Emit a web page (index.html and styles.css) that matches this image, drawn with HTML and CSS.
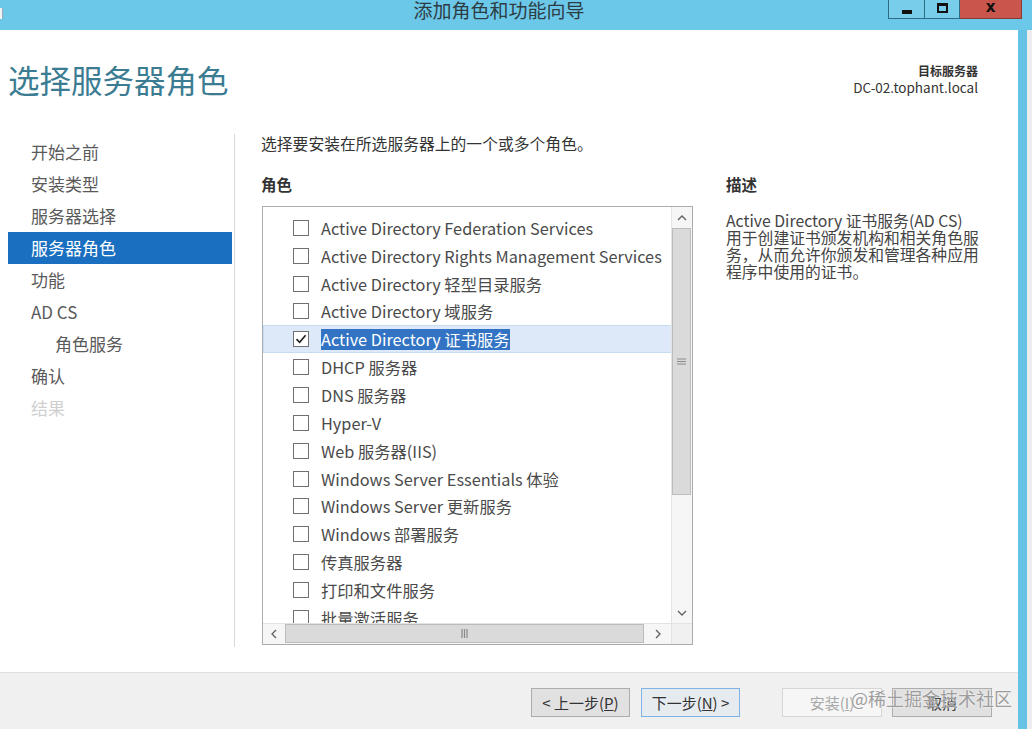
FILE: index.html
```html
<!DOCTYPE html>
<html lang="zh-CN">
<head>
<meta charset="utf-8">
<title>添加角色和功能向导</title>
<link rel="stylesheet" href="styles.css">
</head>
<body>
<div class="screen">
  <div class="titlebar">
    <span class="appicon"></span>
    <div class="title">添加角色和功能向导</div>
    <div class="wbtns">
      <div class="wb min"><span class="min-glyph"></span></div>
      <div class="wb max"><span class="max-glyph"></span></div>
      <div class="wb close">x</div>
    </div>
  </div>
  <div class="frame">
    <div class="client">
      <header class="head">
        <h1>选择服务器角色</h1>
        <div class="target">
          <div class="tlabel">目标服务器</div>
          <div>DC-02.tophant.local</div>
        </div>
      </header>
      <div class="body">
        <nav class="nav">
          <div class="nav-item">开始之前</div>
          <div class="nav-item">安装类型</div>
          <div class="nav-item">服务器选择</div>
          <div class="nav-item active">服务器角色</div>
          <div class="nav-item">功能</div>
          <div class="nav-item">AD CS</div>
          <div class="nav-item sub">角色服务</div>
          <div class="nav-item">确认</div>
          <div class="nav-item disabled">结果</div>
        </nav>
        <section class="main">
          <p class="intro">选择要安装在所选服务器上的一个或多个角色。</p>
          <div class="cols">
            <div class="rolecol">
              <div class="lbl">角色</div>
              <div class="listbox">
                <div class="rows">
                  <div class="row"><span class="cb"></span>Active Directory Federation Services</div>
                  <div class="row"><span class="cb"></span>Active Directory Rights Management Services</div>
                  <div class="row"><span class="cb"></span>Active Directory 轻型目录服务</div>
                  <div class="row"><span class="cb"></span>Active Directory 域服务</div>
                  <div class="row sel"><span class="cb"><svg width="14" height="14" viewBox="0 0 14 14"><path d="M2.5 7.2 L5.6 10.3 L11.6 3.2" fill="none" stroke="#222" stroke-width="1.7"/></svg></span><span class="hl">Active Directory 证书服务</span></div>
                  <div class="row"><span class="cb"></span>DHCP 服务器</div>
                  <div class="row"><span class="cb"></span>DNS 服务器</div>
                  <div class="row"><span class="cb"></span>Hyper-V</div>
                  <div class="row"><span class="cb"></span>Web 服务器(IIS)</div>
                  <div class="row"><span class="cb"></span>Windows Server Essentials 体验</div>
                  <div class="row"><span class="cb"></span>Windows Server 更新服务</div>
                  <div class="row"><span class="cb"></span>Windows 部署服务</div>
                  <div class="row"><span class="cb"></span>传真服务器</div>
                  <div class="row"><span class="cb"></span>打印和文件服务</div>
                  <div class="row"><span class="cb"></span>批量激活服务</div>
                  <div class="row"><span class="cb"></span>网络策略和访问服务</div>
                </div>
                <div class="vscroll">
                  <div class="arrow"><svg width="10" height="6" viewBox="0 0 10 6"><path d="M1 5 L5 1 L9 5" fill="none" stroke="#606060" stroke-width="1.3"/></svg></div>
                  <div class="vthumb"><svg width="9" height="7" viewBox="0 0 9 7"><path d="M0 1 H9 M0 3.5 H9 M0 6 H9" stroke="#8a8a8a" stroke-width="1.2"/></svg></div>
                  <div class="vspace"></div>
                  <div class="arrow"><svg width="10" height="6" viewBox="0 0 10 6"><path d="M1 1 L5 5 L9 1" fill="none" stroke="#606060" stroke-width="1.3"/></svg></div>
                </div>
                <div class="hscroll">
                  <div class="harrow"><svg width="6" height="10" viewBox="0 0 6 10"><path d="M5 1 L1 5 L5 9" fill="none" stroke="#606060" stroke-width="1.3"/></svg></div>
                  <div class="hthumb"><svg width="7" height="9" viewBox="0 0 7 9"><path d="M1 0 V9 M3.5 0 V9 M6 0 V9" stroke="#8a8a8a" stroke-width="1.2"/></svg></div>
                  <div class="harrow right"><svg width="6" height="10" viewBox="0 0 6 10"><path d="M1 1 L5 5 L1 9" fill="none" stroke="#606060" stroke-width="1.3"/></svg></div>
                </div>
                <div class="corner"></div>
              </div>
            </div>
            <div class="desccol">
              <div class="lbl">描述</div>
              <p class="desc">Active Directory 证书服务(AD CS) 用于创建证书颁发机构和相关角色服务，从而允许你颁发和管理各种应用程序中使用的证书。</p>
            </div>
          </div>
        </section>
      </div>
      <footer class="foot">
        <div class="btn b1">&lt; 上一步(<u>P</u>)</div>
        <div class="btn b2 default">下一步(<u>N</u>) &gt;</div>
        <div class="btn b3 disabled">安装(<u>I</u>)</div>
        <div class="btn b4">取消</div>
        <div class="watermark">@稀土掘金技术社区</div>
      </footer>
    </div>
    <div class="rborder"></div>
    <div class="desk"></div>
  </div>
</div>
</body>
</html>
```

FILE: styles.css
```css
* { box-sizing: border-box; }
html, body { margin: 0; padding: 0; }
body {
  width: 1032px;
  height: 729px;
  overflow: hidden;
  font-family: "Noto Sans CJK SC", "Noto Sans", sans-serif;
  background: #ececec;
}
.screen { display: flex; flex-direction: column; height: 729px; }

.titlebar {
  height: 30px;
  flex: none;
  background: #6cc8e8;
  display: flex;
  align-items: flex-start;
  position: relative;
}
.appicon {
  position: absolute;
  left: 0;
  top: 8px;
  width: 3px;
  height: 11px;
  background: #eef3f5;
  border-right: 1px solid #9ab;
}
.title {
  flex: 1;
  padding-left: 110px;
  text-align: center;
  font-size: 19px;
  line-height: 24px;
  margin-top: -2px;
  color: #2d3c44;
}
.wbtns { display: flex; margin-right: 10px; }
.wb {
  height: 19px;
  border: 1px solid #2d6a85;
  border-top: none;
  display: flex;
  align-items: center;
  justify-content: center;
}
.min { width: 37px; background: #78cdeb; }
.max { width: 35px; background: #78cdeb; border-left: none; }
.close {
  width: 62px;
  background: #c8564c;
  border-left: none;
  border-color: #8b3a33;
  color: #111;
  font-family: "DejaVu Sans", sans-serif;
  font-weight: bold;
  font-size: 15px;
  line-height: 15px;
  padding-bottom: 3px;
}
.min-glyph { width: 10px; height: 4px; background: #111; margin-top: 5px; }
.max-glyph { width: 11px; height: 10px; border: 2px solid #111; border-top-width: 3px; margin-bottom: 3px; }

.frame { flex: 1; display: flex; }
.client {
  width: 1018px;
  flex: none;
  display: flex;
  flex-direction: column;
  background: #fff;
}
.rborder { width: 9px; flex: none; background: #66c3e6; }
.desk { flex: 1; background: #ededed; }

.head {
  height: 100px;
  flex: none;
  display: flex;
  justify-content: space-between;
  align-items: flex-start;
  padding: 0 40px 0 8px;
}
h1 {
  margin: 29px 0 0;
  font-size: 31.5px;
  line-height: 40px;
  font-weight: normal;
  color: #3b7c92;
}
.target {
  margin-top: 32px;
  text-align: right;
  font-size: 13.5px;
  line-height: 17px;
  color: #333;
}
.tlabel { font-weight: bold; font-size: 12px; }

.body { flex: 1; display: flex; }
.nav {
  width: 235px;
  flex: none;
  margin: 4px 0 25px;
  padding: 2px 2px 0 8px;
  border-right: 1px solid #d9d9d9;
}
.nav-item {
  height: 32px;
  line-height: 31px;
  padding-left: 23px;
  font-size: 17px;
  color: #5a5a5a;
}
.nav-item.sub { padding-left: 47px; }
.nav-item.active { background: #1a6fc0; color: #fff; }
.nav-item.disabled { color: #d0d0d0; }

.main { flex: 1; padding-left: 26px; }
.intro {
  margin: 4px 0 0;
  font-size: 15.8px;
  line-height: 20px;
  color: #333;
}
.cols { display: flex; margin-top: 20px; }
.rolecol { width: 432px; flex: none; }
.desccol { margin-left: 33px; width: 254px; }
.lbl {
  font-size: 15.5px;
  line-height: 20px;
  font-weight: bold;
  color: #333;
}

.listbox {
  margin: 12px 0 0 1px;
  width: 431px;
  height: 439px;
  border: 1px solid #acacac;
  display: grid;
  grid-template-columns: 1fr 21px;
  grid-template-rows: 1fr 21px;
}
.rows { overflow: hidden; padding-top: 7px; }
.row {
  height: 27.85px;
  display: flex;
  align-items: center;
  padding-left: 30px;
  font-size: 16.3px;
  color: #4a4a4a;
  white-space: nowrap;
}
.row.sel {
  background: #dde9f8;
  border: 1px solid #c6dcf3;
  border-right: none;
  padding-left: 29px;
}
.cb {
  width: 16px;
  height: 16px;
  flex: none;
  border: 1px solid #707070;
  background: #fff;
  margin-right: 12px;
  display: flex;
  align-items: center;
  justify-content: center;
}
.hl {
  background: #3273c3;
  color: #fff;
  line-height: 21px;
}

.vscroll {
  background: #f6f6f6;
  border-left: 1px solid #e3e3e3;
  display: flex;
  flex-direction: column;
}
.arrow {
  height: 21px;
  flex: none;
  display: flex;
  align-items: center;
  justify-content: center;
}
.vthumb {
  height: 267px;
  flex: none;
  margin: 0 1px 0 0;
  background: #dadada;
  border: 1px solid #bcbcbc;
  display: flex;
  align-items: center;
  justify-content: center;
}
.vspace { flex: 1; }

.hscroll {
  display: flex;
  background: #f6f6f6;
  border-top: 1px solid #e3e3e3;
}
.harrow {
  width: 22px;
  flex: none;
  display: flex;
  align-items: center;
  justify-content: center;
}
.harrow.right { flex: 1; }
.hthumb {
  width: 359px;
  flex: none;
  margin: 0 0 1px 0;
  background: #dadada;
  border: 1px solid #bcbcbc;
  display: flex;
  align-items: center;
  justify-content: center;
}
.corner { background: #f0f0f0; border-top: 1px solid #e3e3e3; border-left: 1px solid #e3e3e3; }

.desc {
  margin: 18px 0 0;
  font-size: 15.8px;
  line-height: 17px;
  color: #444;
}

.foot {
  height: 57px;
  flex: none;
  background: #f0f0f0;
  border-top: 1px solid #dfdfdf;
  display: flex;
  justify-content: flex-end;
  align-items: flex-start;
  padding: 15px 26px 0 0;
  position: relative;
}
.btn {
  width: 99px;
  height: 29px;
  border: 1px solid #adadad;
  background: #e1e1e1;
  font-size: 15px;
  color: #333;
  display: flex;
  align-items: center;
  justify-content: center;
  white-space: pre;
}
.btn.b2 { margin-left: 11px; border-color: #7fb3e6; background: #e6ebf0; }
.btn.b3 { margin-left: 42px; width: 100px; background: #f6f6f6; border-color: #d6d6d6; color: #a8a8a8; }
.btn.b4 { margin-left: 10px; width: 100px; }
.watermark {
  position: absolute;
  left: 851px;
  top: 14px;
  font-size: 18px;
  line-height: 22px;
  color: #9d9d9d;
  text-shadow: 0 0 2px #fff;
  white-space: nowrap;
}
```
